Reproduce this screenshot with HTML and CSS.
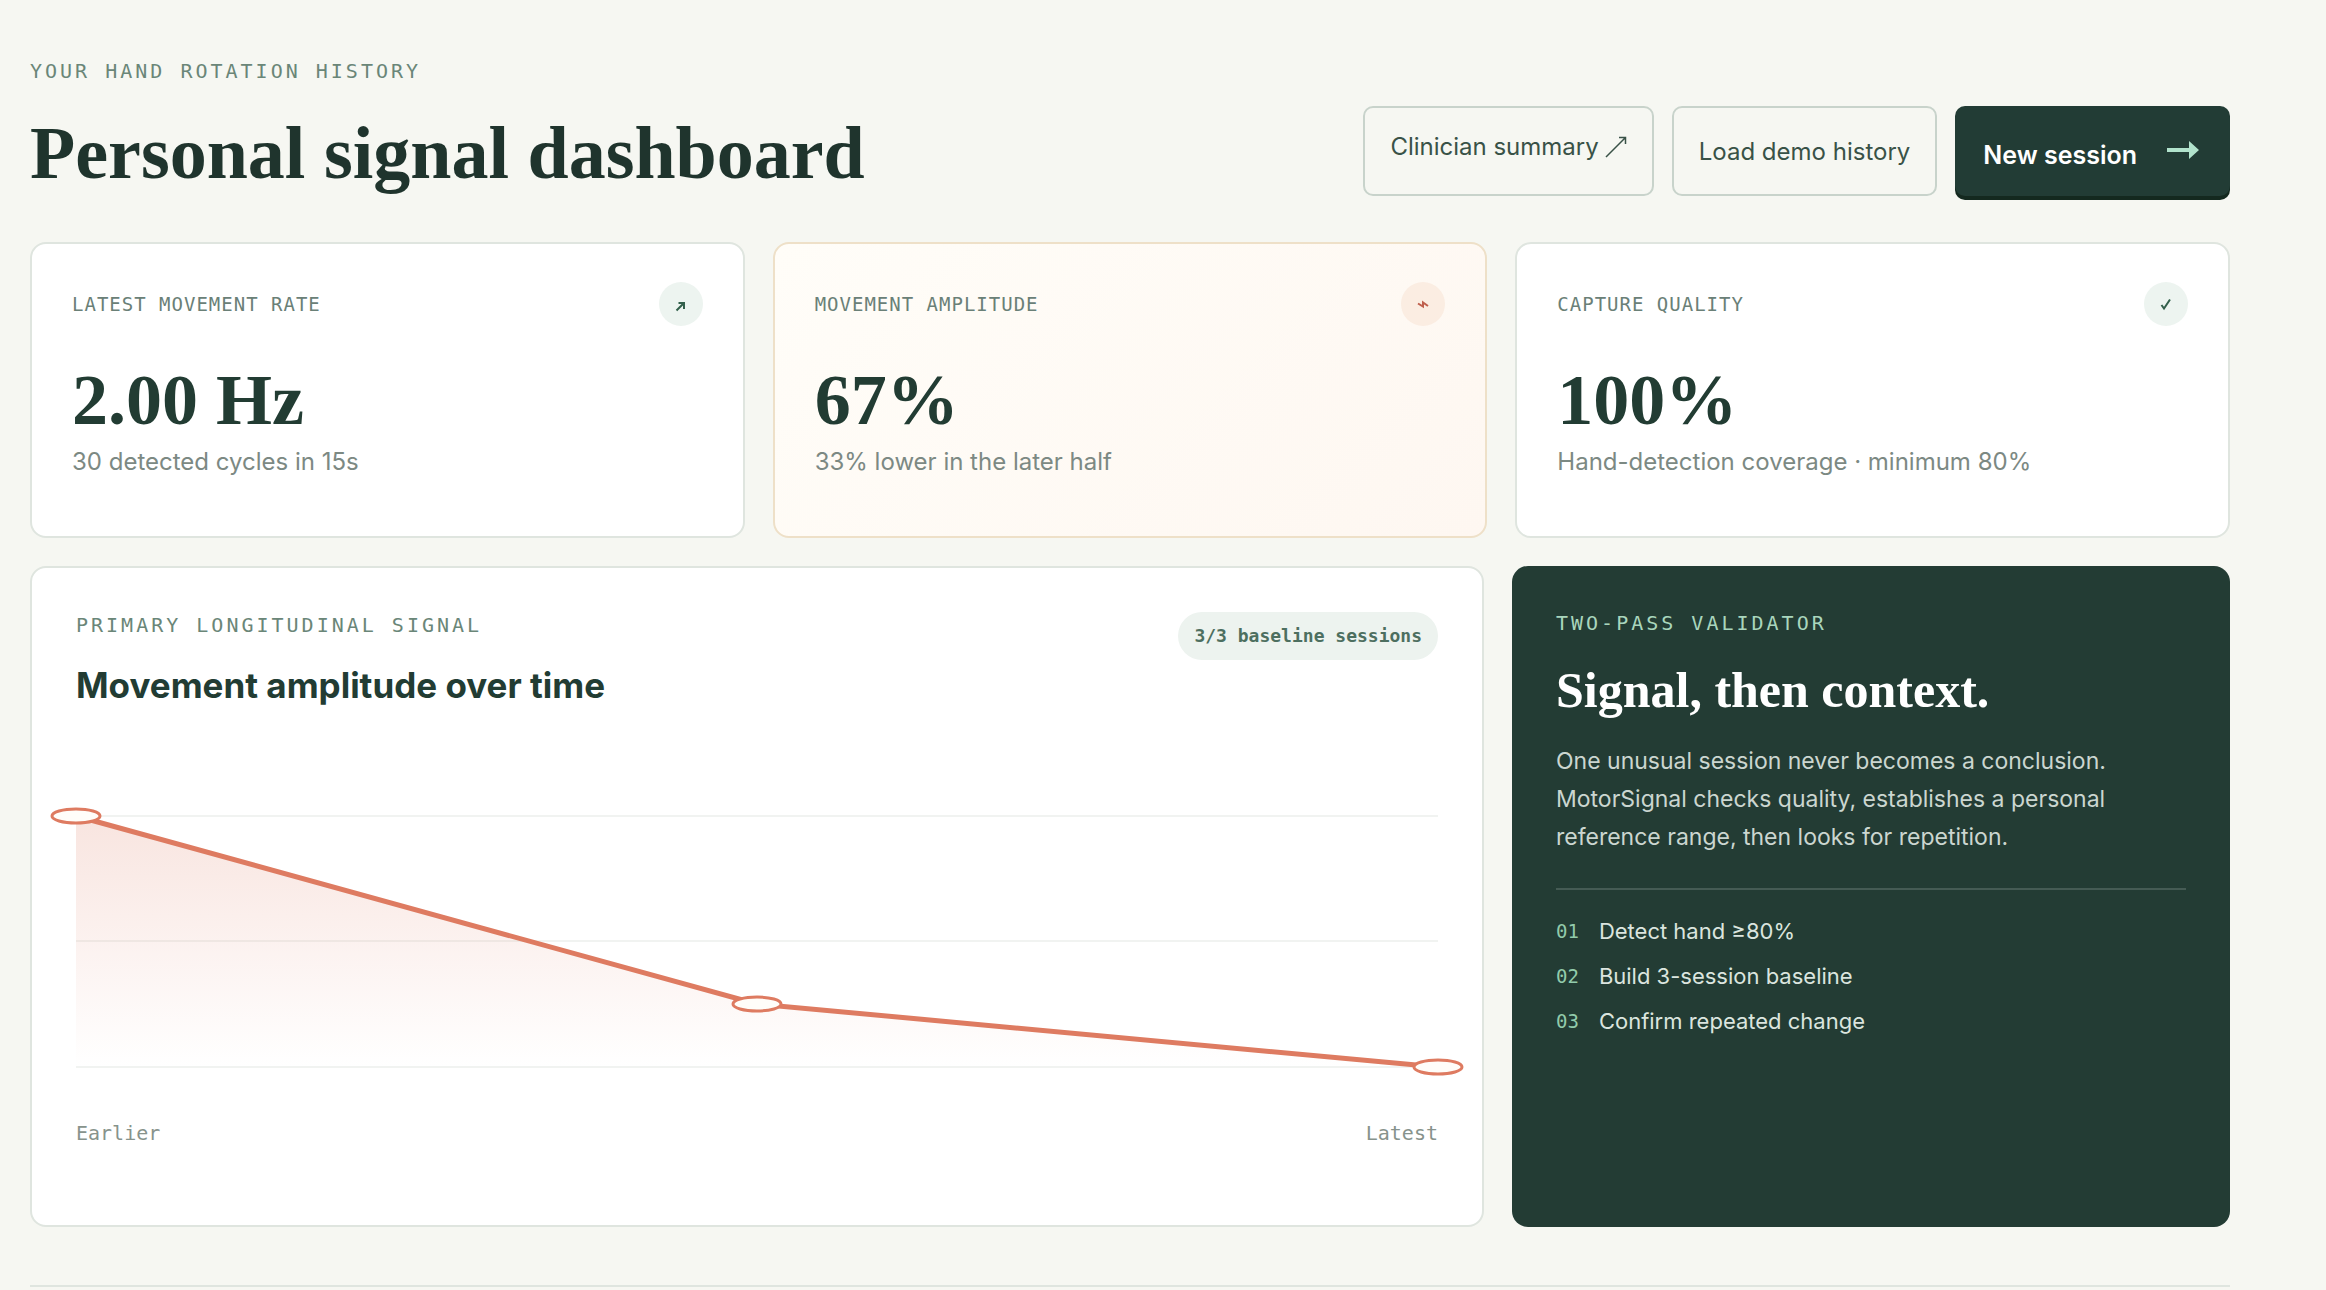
FILE: index.html
```html
<!DOCTYPE html>
<html lang="en">
<head>
<meta charset="utf-8">
<meta name="viewport" content="width=device-width, initial-scale=1">
<title>Personal signal dashboard</title>
<link rel="stylesheet" href="styles.css">
</head>
<body>
<main class="page">
  <header class="page-header">
    <div class="intro">
      <p class="eyebrow">YOUR HAND ROTATION HISTORY</p>
      <h1 class="title">Personal signal dashboard</h1>
    </div>
    <div class="actions">
      <a class="btn btn-link" href="#summary">Clinician summary
        <svg class="ext" viewBox="0 0 22 22" aria-hidden="true"><path d="M1 21 20.500 1.500M14 1.500h6.500V8"/></svg>
      </a>
      <button class="btn" type="button">Load demo history</button>
      <button class="btn btn-primary" type="button">New session
        <svg class="go" viewBox="0 0 32 20" aria-hidden="true"><path d="M0 8h22V1l10 9-10 9v-7H0z"/></svg>
      </button>
    </div>
  </header>

  <section class="metrics" aria-label="Session metrics">
    <article class="card metric">
      <div class="metric-head">
        <h2 class="label">LATEST MOVEMENT RATE</h2>
        <span class="badge"><svg viewBox="0 0 44 44" aria-hidden="true"><path d="M17.500 28.500 25 21M19.500 21H25v6" /></svg></span>
      </div>
      <p class="value">2.00 Hz</p>
      <p class="note">30 detected cycles in 15s</p>
    </article>
    <article class="card metric metric-warm">
      <div class="metric-head">
        <h2 class="label">MOVEMENT AMPLITUDE</h2>
        <span class="badge badge-warm"><svg viewBox="0 0 44 44" aria-hidden="true"><path d="M17 21.500 22 24.500V20.500L27 24"/></svg></span>
      </div>
      <p class="value">67%</p>
      <p class="note">33% lower in the later half</p>
    </article>
    <article class="card metric">
      <div class="metric-head">
        <h2 class="label">CAPTURE QUALITY</h2>
        <span class="badge"><svg viewBox="0 0 44 44" aria-hidden="true"><path d="M17.500 23 20 26.500 26 17.500"/></svg></span>
      </div>
      <p class="value">100%</p>
      <p class="note">Hand-detection coverage · minimum 80%</p>
    </article>
  </section>

  <section class="details">
    <article class="card chart-card">
      <div class="chart-head">
        <div>
          <p class="eyebrow">PRIMARY LONGITUDINAL SIGNAL</p>
          <h2 class="chart-title">Movement amplitude over time</h2>
        </div>
        <span class="pill">3/3 baseline sessions</span>
      </div>
      <svg class="chart" viewBox="0 0 1362 280" preserveAspectRatio="none" role="img" aria-label="Movement amplitude falling from earlier to latest session">
        <defs>
          <linearGradient id="fade" x1="0" y1="0" x2="0" y2="1">
            <stop offset="0" stop-color="#de7b61" stop-opacity="0.2"/>
            <stop offset="1" stop-color="#de7b61" stop-opacity="0"/>
          </linearGradient>
        </defs>
        <path class="grid-line" d="M0 15H1362M0 140H1362M0 266H1362"/>
        <path fill="url(#fade)" d="M0 15 681 203 1362 266H0z"/>
        <path class="trend" d="M0 15 681 203 1362 266"/>
        <ellipse class="point" cx="0" cy="15" rx="24" ry="7"/>
        <ellipse class="point" cx="681" cy="203" rx="24" ry="7"/>
        <ellipse class="point" cx="1362" cy="266" rx="24" ry="7"/>
      </svg>
      <div class="axis"><span>Earlier</span><span>Latest</span></div>
    </article>

    <aside class="validator">
      <p class="eyebrow eyebrow-mint">TWO-PASS VALIDATOR</p>
      <h2 class="validator-title">Signal, then context.</h2>
      <p class="validator-text">One unusual session never becomes a conclusion. MotorSignal checks quality, establishes a personal reference range, then looks for repetition.</p>
      <ol class="steps">
        <li><span class="num">01</span>Detect hand ≥80%</li>
        <li><span class="num">02</span>Build 3-session baseline</li>
        <li><span class="num">03</span>Confirm repeated change</li>
      </ol>
    </aside>
  </section>
  <hr class="rule">
</main>
</body>
</html>
```
FILE: styles.css
```css
:root {
  --sans: Inter, "Liberation Sans", sans-serif;
  --serif: "Liberation Serif", serif;
  --mono: "DejaVu Sans Mono", monospace;
  --ink: #223c33;
  --line: #dfe5df;
}
* { box-sizing: border-box; }
body {
  margin: 0;
  background: #f6f7f2;
  color: var(--ink);
  font-family: var(--sans);
}
h1, h2, p, ol { margin: 0; padding: 0; }

.page { padding: 56px 96px 0 30px; }

.page-header {
  display: flex;
  justify-content: space-between;
  align-items: flex-start;
}
.eyebrow {
  font: 400 20px/30px var(--mono);
  letter-spacing: 3px;
  color: #6a8678;
}
.title {
  margin-top: 22px;
  font: 700 74px/90px var(--serif);
  color: #1f342d;
}
.actions {
  display: flex;
  gap: 18px;
  padding-top: 50px;
}
.btn {
  display: flex;
  align-items: center;
  height: 90px;
  padding: 2px 25px 0;
  border: 2px solid #c8d3cb;
  border-radius: 10px;
  background: transparent;
  color: #395247;
  font: 400 24px/32px var(--sans);
  text-decoration: none;
}
.btn-link { padding-bottom: 10px; gap: 6px; }
.btn-primary {
  gap: 30px;
  padding: 8px 31px 0 28px;
  border: 0;
  background: #223c35;
  color: #fff;
  font-size: 25px;
  font-weight: 600;
  box-shadow: 0 4px 0 #14291f;
}
.ext { width: 22px; height: 22px; fill: none; stroke: currentColor; stroke-width: 1.5; }
.go { width: 32px; height: 20px; margin-bottom: 10px; fill: #b1e3cc; }

.metrics {
  display: grid;
  grid-template-columns: repeat(3, 1fr);
  gap: 28px;
  margin-top: 44px;
}
.card {
  border: 2px solid var(--line);
  border-radius: 16px;
  background: #fff;
}
.metric { padding: 38px 40px 56px; }
.metric-warm {
  border-color: #eee0c8;
  background: linear-gradient(135deg, #fffdf8, #fef7f1);
}
.metric-head {
  display: flex;
  justify-content: space-between;
  align-items: center;
}
.label {
  font: 400 19px/30px var(--mono);
  letter-spacing: 1px;
  color: #6a8077;
}
.badge {
  width: 44px;
  height: 44px;
  border-radius: 50%;
  background: #edf4f0;
  color: #33604c;
}
.badge svg { display: block; fill: none; stroke: currentColor; stroke-width: 2; }
.badge-warm { background: #fbede2; color: #bf5f4c; }
.value { margin-top: 34px; font: 700 72px/80px var(--serif); }
.note { margin-top: 4px; font-size: 24px; line-height: 36px; color: #7c8983; }

.details {
  display: grid;
  grid-template-columns: 1454fr 718fr;
  gap: 28px;
  margin-top: 28px;
}
.chart-card { padding: 42px 44px 77px; }
.chart-head {
  display: flex;
  justify-content: space-between;
  align-items: flex-start;
}
.chart-title { margin-top: 23px; font: 700 35px/44px var(--sans); }
.pill {
  margin-top: 2px;
  padding: 9px 16px;
  border-radius: 24px;
  background: #edf3ef;
  color: #4d6f60;
  font: 700 18px/30px var(--mono);
}
.chart {
  display: block;
  width: 100%;
  height: 280px;
  margin-top: 94px;
  overflow: visible;
}
.chart path, .chart ellipse { vector-effect: non-scaling-stroke; }
.grid-line { stroke: #f1f3f1; stroke-width: 2; }
.trend { fill: none; stroke: #de7b61; stroke-width: 5; }
.point { fill: #fffdf9; stroke: #de7b61; stroke-width: 3; }
.axis {
  display: flex;
  justify-content: space-between;
  margin-top: 37px;
  font: 400 20px/30px var(--mono);
  color: #87938c;
}

.validator {
  padding: 42px 44px;
  border-radius: 16px;
  background: #233c34;
  color: #dbe5df;
}
.eyebrow-mint { color: #a9d6bd; }
.validator-title { margin-top: 24px; font: 700 50px/56px var(--serif); color: #fff; }
.validator-text { margin-top: 24px; font-size: 23px; line-height: 38px; color: #cbd6d0; }
.steps {
  display: grid;
  gap: 15px;
  margin-top: 32px;
  padding-top: 26px;
  border-top: 2px solid #455b54;
  list-style: none;
  font-size: 22px;
  line-height: 30px;
}
.steps li { display: flex; align-items: center; gap: 20px; }
.num { font: 400 19px/30px var(--mono); color: #92cbab; }

.rule { margin: 58px 0 0; border: 0; border-top: 2px solid var(--line); }
```
